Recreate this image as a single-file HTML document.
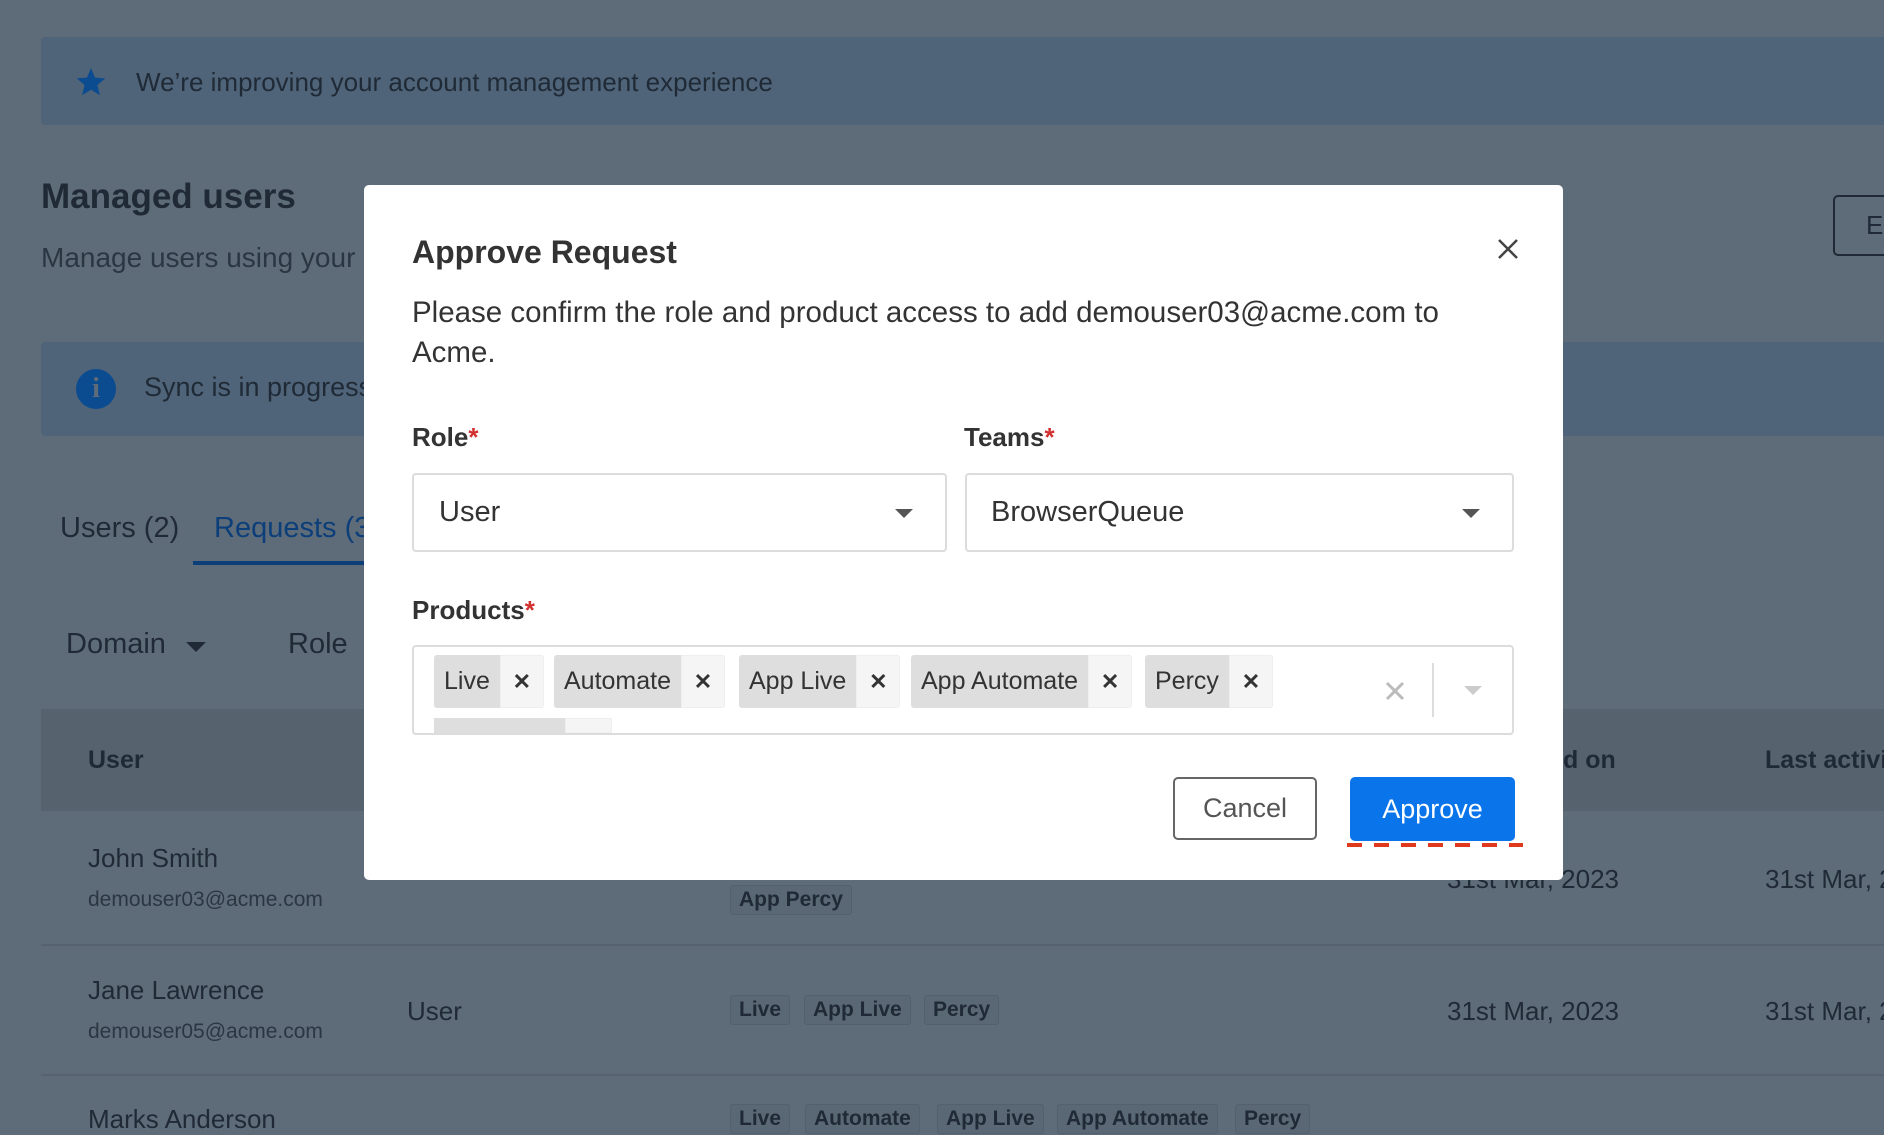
<!DOCTYPE html>
<html><head><meta charset="utf-8"><style>
*{box-sizing:border-box;margin:0;padding:0}
body{width:1884px;height:1126px;overflow:hidden;background:#5e6c79;font-family:"Liberation Sans",sans-serif;position:relative;color:#1f2a36}
.a{position:absolute;white-space:nowrap}
.bn{background:#4f6479;border-radius:4px}
.tg{position:absolute;border:1px solid #526070;border-radius:3px;padding:0 8px;height:30px;line-height:28px;font-size:21px;color:#1f2a36;font-weight:bold;background:#5a6875}
.modal{position:absolute;left:364px;top:185px;width:1199px;height:695px;background:#fff;border-radius:5px}
.m{position:absolute;white-space:nowrap;color:#333}
.sel{position:absolute;border:2px solid #dcdcdc;border-radius:4px;background:#fff}
.tag{position:absolute;top:655px;height:53px;display:flex;border-radius:3px;overflow:hidden;font-size:25px;color:#333}
.tag span{background:#dedede;padding:0 10px;line-height:53px}
.tag b{background:#f5f5f5;width:44px;text-align:center;line-height:51px;font-size:22px;border:1px solid #eee}
</style></head><body>
<div class="a bn" style="left:41px;top:37px;width:1900px;height:88px"></div>
<svg class="a" style="left:75px;top:66px" width="32" height="32" viewBox="0 0 24 24"><path fill="#0b4b8f" d="M12 1.5l3 7.2 7.7.6-5.9 5 1.9 7.6L12 17.8l-6.7 4.1 1.9-7.6-5.9-5 7.7-.6z"/></svg>
<div class="a" style="left:136px;top:67px;font-size:26px;color:#1f2a36">We’re improving your account management experience</div>
<div class="a" style="left:41px;top:177px;font-size:35px;font-weight:bold">Managed users</div>
<div class="a" style="left:41px;top:242px;font-size:28px;color:#2b3643">Manage users using your</div>
<div class="a" style="left:1833px;top:195px;width:80px;height:61px;border:2px solid #1f2a36;border-radius:5px"></div>
<div class="a" style="left:1866px;top:210px;font-size:26px">E</div>
<div class="a bn" style="left:41px;top:342px;width:1900px;height:94px"></div>
<div class="a" style="left:76px;top:369px;width:40px;height:40px;border-radius:50%;background:#0b4b8f;color:#5e6c79;font-weight:bold;font-size:28px;text-align:center;line-height:40px;font-family:'Liberation Serif',serif">i</div>
<div class="a" style="left:144px;top:372px;font-size:27px">Sync is in progress.</div>
<div class="a" style="left:60px;top:512px;font-size:29px">Users (2)</div>
<div class="a" style="left:214px;top:512px;font-size:29px;color:#0c3f7a">Requests (3</div>
<div class="a" style="left:193px;top:561px;width:180px;height:4px;background:#0c3f7a"></div>
<div class="a" style="left:66px;top:628px;font-size:29px">Domain</div>
<div class="a" style="left:186px;top:642px;border-left:10px solid transparent;border-right:10px solid transparent;border-top:10px solid #1f2a36"></div>
<div class="a" style="left:288px;top:628px;font-size:29px">Role</div>
<div class="a" style="left:41px;top:709px;width:1900px;height:102px;background:#56636f"></div>
<div class="a" style="left:88px;top:746px;font-size:25px;font-weight:bold">User</div>
<div class="a" style="left:1563px;top:746px;font-size:25px;font-weight:bold">d on</div>
<div class="a" style="left:1765px;top:746px;font-size:25px;font-weight:bold">Last activi</div>
<div class="a" style="left:88px;top:843px;font-size:26px">John Smith</div>
<div class="a" style="left:88px;top:888px;font-size:21px;color:#2b3643">demouser03@acme.com</div>
<div class="tg" style="left:730px;top:885px">App Percy</div>
<div class="a" style="left:1447px;top:864px;font-size:26px">31st Mar, 2023</div>
<div class="a" style="left:1765px;top:864px;font-size:26px">31st Mar, 2023</div>
<div class="a" style="left:41px;top:944px;width:1900px;height:2px;background:#56636f"></div>
<div class="a" style="left:88px;top:975px;font-size:26px">Jane Lawrence</div>
<div class="a" style="left:88px;top:1020px;font-size:21px;color:#2b3643">demouser05@acme.com</div>
<div class="a" style="left:407px;top:996px;font-size:26px">User</div>
<div class="tg" style="left:730px;top:995px">Live</div>
<div class="tg" style="left:804px;top:995px">App Live</div>
<div class="tg" style="left:924px;top:995px">Percy</div>
<div class="a" style="left:1447px;top:996px;font-size:26px">31st Mar, 2023</div>
<div class="a" style="left:1765px;top:996px;font-size:26px">31st Mar, 2023</div>
<div class="a" style="left:41px;top:1074px;width:1900px;height:2px;background:#56636f"></div>
<div class="a" style="left:88px;top:1104px;font-size:26px">Marks Anderson</div>
<div class="tg" style="left:730px;top:1104px">Live</div>
<div class="tg" style="left:805px;top:1104px">Automate</div>
<div class="tg" style="left:937px;top:1104px">App Live</div>
<div class="tg" style="left:1057px;top:1104px">App Automate</div>
<div class="tg" style="left:1235px;top:1104px">Percy</div>

<div class="modal"></div>
<div class="m" style="left:412px;top:234px;font-size:32px;font-weight:bold">Approve Request</div>
<svg class="a" style="left:1497px;top:238px" width="22" height="22" viewBox="0 0 22 22"><path d="M2 2L20 20M20 2L2 20" stroke="#444" stroke-width="2.5"/></svg>
<div class="m" style="left:412px;top:293px;font-size:29.5px;line-height:40px">Please confirm the role and product access to add demouser03@acme.com to<br>Acme.</div>
<div class="m" style="left:412px;top:422px;font-size:26px;font-weight:bold">Role<span style="color:#d32f2f">*</span></div>
<div class="m" style="left:964px;top:422px;font-size:26px;font-weight:bold">Teams<span style="color:#d32f2f">*</span></div>
<div class="sel" style="left:412px;top:473px;width:535px;height:79px"></div>
<div class="m" style="left:439px;top:496px;font-size:29px">User</div>
<div class="a" style="left:895px;top:509px;border-left:9px solid transparent;border-right:9px solid transparent;border-top:9px solid #555"></div>
<div class="sel" style="left:965px;top:473px;width:549px;height:79px"></div>
<div class="m" style="left:991px;top:496px;font-size:29px">BrowserQueue</div>
<div class="a" style="left:1462px;top:509px;border-left:9px solid transparent;border-right:9px solid transparent;border-top:9px solid #555"></div>
<div class="m" style="left:412px;top:595px;font-size:26px;font-weight:bold">Products<span style="color:#d32f2f">*</span></div>
<div class="sel" style="left:412px;top:645px;width:1102px;height:90px"></div>
<div class="tag" style="left:434px"><span>Live</span><b>✕</b></div>
<div class="tag" style="left:554px"><span>Automate</span><b>✕</b></div>
<div class="tag" style="left:739px"><span>App Live</span><b>✕</b></div>
<div class="tag" style="left:911px"><span>App Automate</span><b>✕</b></div>
<div class="tag" style="left:1145px"><span>Percy</span><b>✕</b></div>
<div class="a" style="left:434px;top:718px;width:131px;height:15px;background:#dedede"></div>
<div class="a" style="left:565px;top:718px;width:47px;height:15px;background:#f5f5f5;border:1px solid #eee"></div>
<svg class="a" style="left:1385px;top:681px" width="20" height="20" viewBox="0 0 20 20"><path d="M2 2L18 18M18 2L2 18" stroke="#bbb" stroke-width="3"/></svg>
<div class="a" style="left:1432px;top:663px;width:2px;height:54px;background:#ddd"></div>
<div class="a" style="left:1464px;top:686px;border-left:9px solid transparent;border-right:9px solid transparent;border-top:9px solid #ccc"></div>
<div class="a" style="left:1173px;top:777px;width:144px;height:63px;border:2px solid #666;border-radius:5px;background:#fff;text-align:center;line-height:59px;font-size:27px;color:#555">Cancel</div>
<div class="a" style="left:1350px;top:777px;width:165px;height:64px;border-radius:5px;background:#0a74ea;text-align:center;line-height:64px;font-size:27px;color:#fff">Approve</div>
<div class="a" style="left:1347px;top:843px;width:176px;height:4px;background:repeating-linear-gradient(90deg,#e03a1e 0 15px,transparent 15px 27px)"></div>
</body></html>
